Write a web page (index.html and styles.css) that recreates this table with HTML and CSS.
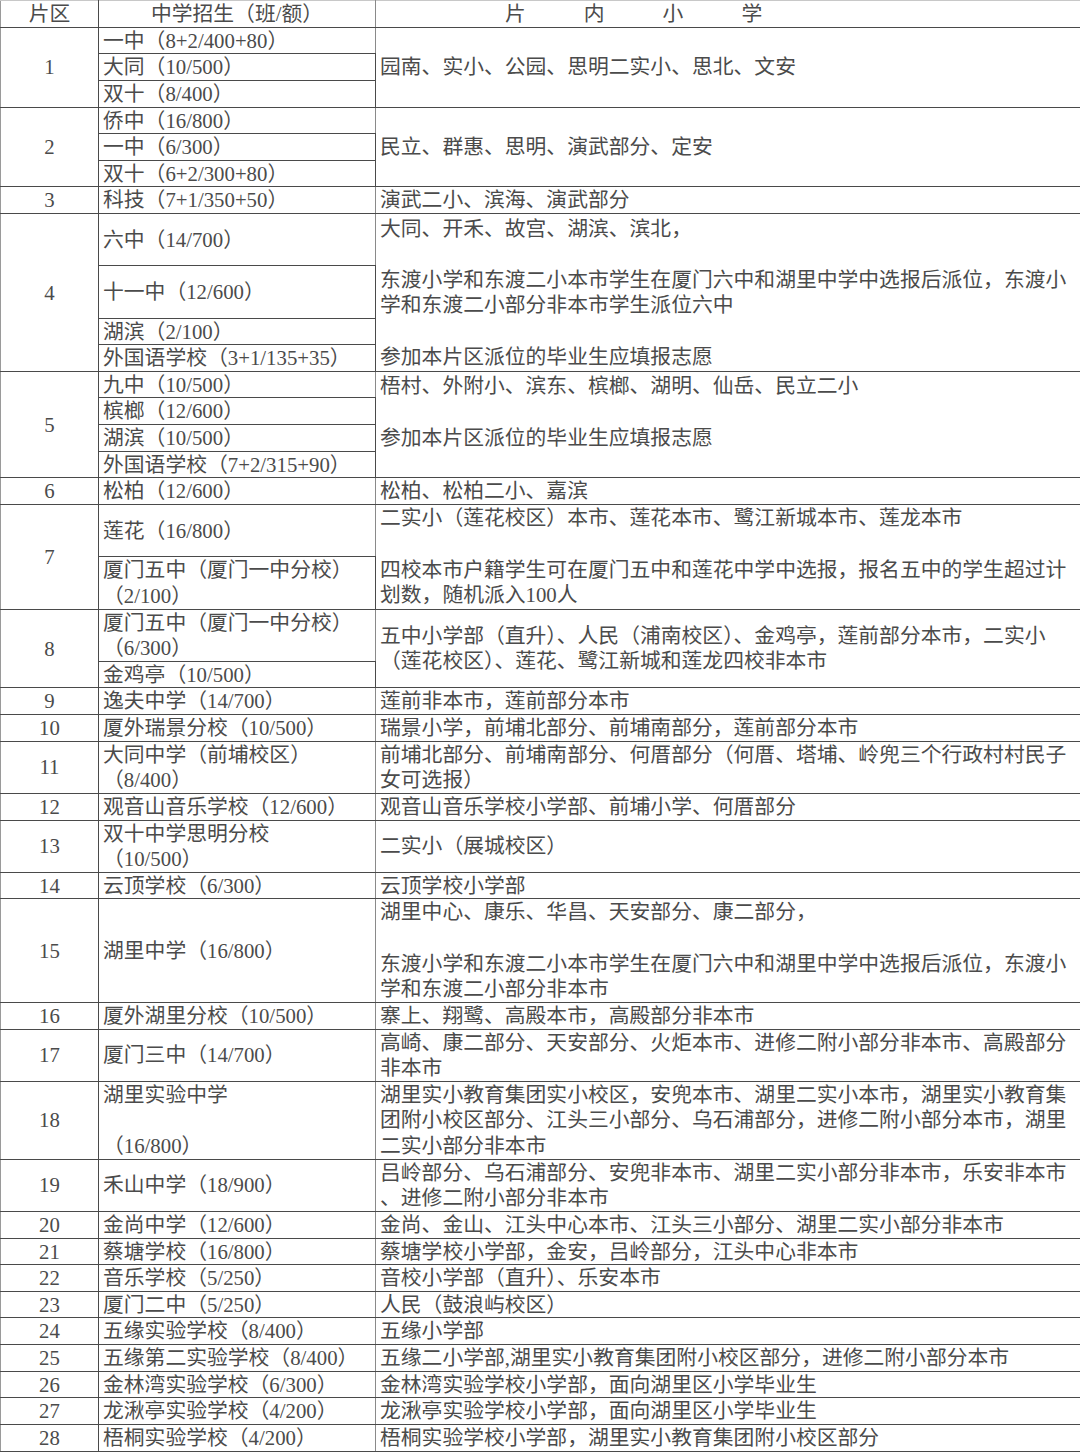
FILE: index.html
```html
<!DOCTYPE html>
<html lang="zh-CN">
<head>
<meta charset="utf-8">
<title>片区招生</title>
<link rel="stylesheet" href="styles.css">
</head>
<body>
<table class="tbl">
<colgroup><col class="w1"><col class="w2"><col class="w3"></colgroup>
<tr class="hdr"><td class="c1">片区</td><td class="c2 ctr">中学招生（班/额）</td><td class="c3 hd3">片内小学</td></tr>

<tr><td class="c1" rowspan="3">1</td><td class="c2">一中（8+2/400+80）</td><td class="c3" rowspan="3">园南、实小、公园、思明二实小、思北、文安</td></tr>
<tr><td class="c2">大同（10/500）</td></tr>
<tr><td class="c2">双十（8/400）</td></tr>

<tr><td class="c1" rowspan="3">2</td><td class="c2">侨中（16/800）</td><td class="c3" rowspan="3">民立、群惠、思明、演武部分、定安</td></tr>
<tr><td class="c2">一中（6/300）</td></tr>
<tr><td class="c2">双十（6+2/300+80）</td></tr>

<tr><td class="c1">3</td><td class="c2">科技（7+1/350+50）</td><td class="c3">演武二小、滨海、演武部分</td></tr>

<tr><td class="c1" rowspan="4">4</td><td class="c2 h2">六中（14/700）</td><td class="c3" rowspan="4">大同、开禾、故宫、湖滨、滨北，<br><br>东渡小学和东渡二小本市学生在厦门六中和湖里中学中选报后派位，东渡小<br>学和东渡二小部分非本市学生派位六中<br><br>参加本片区派位的毕业生应填报志愿</td></tr>
<tr><td class="c2 h2">十一中（12/600）</td></tr>
<tr><td class="c2">湖滨（2/100）</td></tr>
<tr><td class="c2">外国语学校（3+1/135+35）</td></tr>

<tr><td class="c1" rowspan="4">5</td><td class="c2">九中（10/500）</td><td class="c3" rowspan="4">梧村、外附小、滨东、槟榔、湖明、仙岳、民立二小<br><br>参加本片区派位的毕业生应填报志愿<br>&nbsp;</td></tr>
<tr><td class="c2">槟榔（12/600）</td></tr>
<tr><td class="c2">湖滨（10/500）</td></tr>
<tr><td class="c2">外国语学校（7+2/315+90）</td></tr>

<tr><td class="c1">6</td><td class="c2">松柏（12/600）</td><td class="c3">松柏、松柏二小、嘉滨</td></tr>

<tr><td class="c1" rowspan="2">7</td><td class="c2 h2">莲花（16/800）</td><td class="c3" rowspan="2">二实小（莲花校区）本市、莲花本市、鹭江新城本市、莲龙本市<br><br>四校本市户籍学生可在厦门五中和莲花中学中选报，报名五中的学生超过计<br>划数，随机派入100人</td></tr>
<tr><td class="c2">厦门五中（厦门一中分校）<br>（2/100）</td></tr>

<tr><td class="c1" rowspan="2">8</td><td class="c2">厦门五中（厦门一中分校）<br>（6/300）</td><td class="c3" rowspan="2">五中小学部（直升）、人民（浦南校区）、金鸡亭，莲前部分本市，二实小<br>（莲花校区）、莲花、鹭江新城和莲龙四校非本市</td></tr>
<tr><td class="c2">金鸡亭（10/500）</td></tr>

<tr><td class="c1">9</td><td class="c2">逸夫中学（14/700）</td><td class="c3">莲前非本市，莲前部分本市</td></tr>
<tr><td class="c1">10</td><td class="c2">厦外瑞景分校（10/500）</td><td class="c3">瑞景小学，前埔北部分、前埔南部分，莲前部分本市</td></tr>
<tr><td class="c1">11</td><td class="c2">大同中学（前埔校区）<br>（8/400）</td><td class="c3">前埔北部分、前埔南部分、何厝部分（何厝、塔埔、岭兜三个行政村村民子<br>女可选报）</td></tr>
<tr><td class="c1">12</td><td class="c2">观音山音乐学校（12/600）</td><td class="c3">观音山音乐学校小学部、前埔小学、何厝部分</td></tr>
<tr><td class="c1">13</td><td class="c2">双十中学思明分校<br>（10/500）</td><td class="c3">二实小（展城校区）</td></tr>
<tr><td class="c1">14</td><td class="c2">云顶学校（6/300）</td><td class="c3">云顶学校小学部</td></tr>
<tr><td class="c1">15</td><td class="c2">湖里中学（16/800）</td><td class="c3">湖里中心、康乐、华昌、天安部分、康二部分，<br><br>东渡小学和东渡二小本市学生在厦门六中和湖里中学中选报后派位，东渡小<br>学和东渡二小部分非本市</td></tr>
<tr><td class="c1">16</td><td class="c2">厦外湖里分校（10/500）</td><td class="c3">寨上、翔鹭、高殿本市，高殿部分非本市</td></tr>
<tr><td class="c1">17</td><td class="c2">厦门三中（14/700）</td><td class="c3">高崎、康二部分、天安部分、火炬本市、进修二附小部分非本市、高殿部分<br>非本市</td></tr>
<tr><td class="c1">18</td><td class="c2">湖里实验中学<br><br>（16/800）</td><td class="c3">湖里实小教育集团实小校区，安兜本市、湖里二实小本市，湖里实小教育集<br>团附小校区部分、江头三小部分、乌石浦部分，进修二附小部分本市，湖里<br>二实小部分非本市</td></tr>
<tr><td class="c1">19</td><td class="c2">禾山中学（18/900）</td><td class="c3">吕岭部分、乌石浦部分、安兜非本市、湖里二实小部分非本市，乐安非本市<br>、进修二附小部分非本市</td></tr>
<tr><td class="c1">20</td><td class="c2">金尚中学（12/600）</td><td class="c3">金尚、金山、江头中心本市、江头三小部分、湖里二实小部分非本市</td></tr>
<tr><td class="c1">21</td><td class="c2">蔡塘学校（16/800）</td><td class="c3">蔡塘学校小学部，金安，吕岭部分，江头中心非本市</td></tr>
<tr><td class="c1">22</td><td class="c2">音乐学校（5/250）</td><td class="c3">音校小学部（直升）、乐安本市</td></tr>
<tr><td class="c1">23</td><td class="c2">厦门二中（5/250）</td><td class="c3">人民（鼓浪屿校区）</td></tr>
<tr><td class="c1">24</td><td class="c2">五缘实验学校（8/400）</td><td class="c3">五缘小学部</td></tr>
<tr><td class="c1">25</td><td class="c2">五缘第二实验学校（8/400）</td><td class="c3">五缘二小学部,湖里实小教育集团附小校区部分，进修二附小部分本市</td></tr>
<tr><td class="c1">26</td><td class="c2">金林湾实验学校（6/300）</td><td class="c3">金林湾实验学校小学部，面向湖里区小学毕业生</td></tr>
<tr><td class="c1">27</td><td class="c2">龙湫亭实验学校（4/200）</td><td class="c3">龙湫亭实验学校小学部，面向湖里区小学毕业生</td></tr>
<tr><td class="c1">28</td><td class="c2">梧桐实验学校（4/200）</td><td class="c3">梧桐实验学校小学部，湖里实小教育集团附小校区部分</td></tr>
</table>
</body>
</html>
```

FILE: styles.css
```css
html, body {
  margin: 0;
  padding: 0;
  background: #ffffff;
}

.tbl {
  width: 1080px;
  border-collapse: collapse;
  table-layout: fixed;
  font-family: "Liberation Serif", "Noto Sans CJK SC", serif;
  font-size: 20.8px;
  line-height: 25.63px;
  color: #4b4b4b;
}

.w1 { width: 98px; }
.w2 { width: 277px; }
.w3 { width: 705px; }

.tbl td {
  border: 1px solid #4a4a4a;
  padding: 0 0 0 4px;
  vertical-align: middle;
  white-space: nowrap;
  text-align: left;
  overflow: hidden;
}

.tbl .c1 {
  text-align: center;
  padding: 0;
  border-left-color: #9a9a9a;
}

.tbl .c2 {
  border-left-color: #8a8a8a;
  border-right-color: #8a8a8a;
}

.tbl .c3 {
  border-right-color: #8a8a8a;
}

.tbl .ctr {
  text-align: center;
  padding: 0;
}

.tbl .h2 {
  height: 51.3px;
}

.hdr td {
  border-top-color: #c8c8c8;
}

.tbl .hd3 {
  padding-left: 129px;
  letter-spacing: 58px;
}
```
